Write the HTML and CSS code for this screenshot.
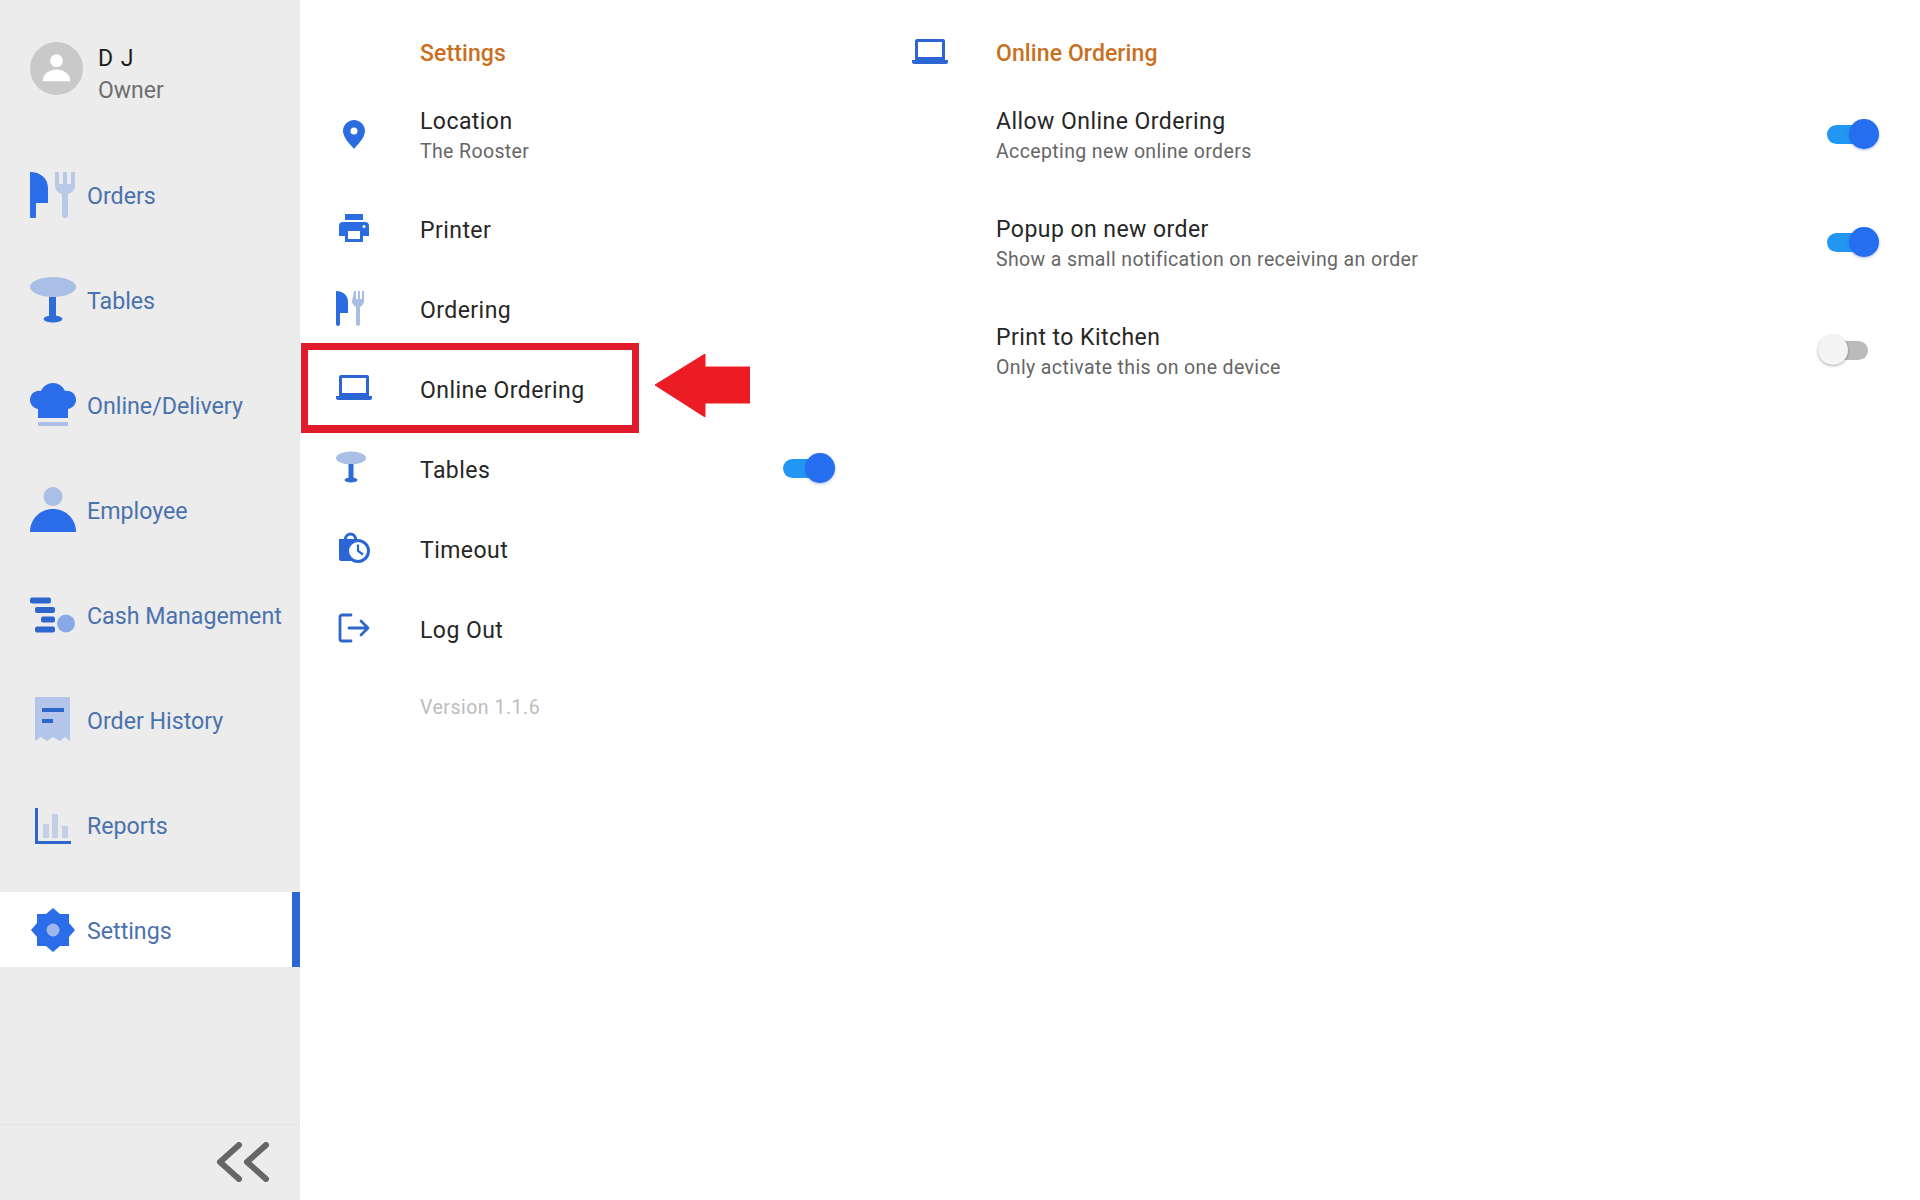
FILE: index.html
```html
<!DOCTYPE html>
<html lang="en">
<head>
<meta charset="utf-8">
<title>Settings</title>
<link rel="stylesheet" href="styles.css">
</head>
<body>
<div class="app">
  <aside class="sidebar">
    <div class="profile">
      <svg class="avatar" viewBox="0 0 54 54"><circle cx="27" cy="27" r="27" fill="#c9c9c9"/><circle cx="27" cy="19" r="6.5" fill="#fff"/><path d="M13 40c0-8 7-12 14-12s14 4 14 12z" fill="#fff"/></svg>
      <div class="profile-text"><div class="profile-name">D J</div><div class="profile-role">Owner</div></div>
    </div>
    <nav class="nav">
      <div class="nav-item"><svg class="nav-icon" viewBox="0 0 46 46"><path d="M0 0c10 0 18 6 18 16v15H6v13a3 3 0 0 1-6 0z" fill="#2b6de8"/><path d="M25 0h4v12h4V0h4v12h4V0h4v14c0 4-3 7-7 8v21a3 3 0 0 1-6 0V22c-4-1-7-4-7-8z" fill="#b9c9e8"/></svg><span>Orders</span></div>
      <div class="nav-item"><svg class="nav-icon" viewBox="0 0 46 46"><ellipse cx="23" cy="10" rx="23" ry="10" fill="#a9bfe6"/><rect x="19" y="20" width="7" height="21" fill="#2f6cd8"/><ellipse cx="23" cy="42" rx="9.500" ry="3.500" fill="#2f6cd8"/></svg><span>Tables</span></div>
      <div class="nav-item"><svg class="nav-icon" viewBox="0 0 46 46"><path d="M8 27C3 26 0 22 0 18c0-6 5-10 11-9 2-5 7-8 12-8s10 3 12 8c6-1 11 3 11 9 0 4-3 8-8 9v9H8z" fill="#2b6de8"/><rect x="8" y="40" width="30" height="4" rx="1" fill="#a9bfe6"/></svg><span>Online/Delivery</span></div>
      <div class="nav-item"><svg class="nav-icon" viewBox="0 0 46 46"><circle cx="23" cy="9.500" r="9.500" fill="#a9bfe6"/><path d="M0 45c0-13 10-23 23-23s23 10 23 23z" fill="#2b6de8"/></svg><span>Employee</span></div>
      <div class="nav-item"><svg class="nav-icon" viewBox="0 0 46 46"><g fill="#2f66cc"><rect y="5.500" width="21" height="6" rx="2"/><rect x="5" y="15" width="20" height="6" rx="2"/><rect x="11" y="24.500" width="14" height="6" rx="2"/><rect x="5" y="34.500" width="20" height="6" rx="2"/></g><circle cx="36" cy="31.500" r="9" fill="#88a8e6"/></svg><span>Cash Management</span></div>
      <div class="nav-item"><svg class="nav-icon" viewBox="0 0 46 46"><path d="M5 0h35v44l-5-4-5 4-7-4-6 4-6-4-6 4z" fill="#b3c6ea"/><rect x="12" y="11" width="22" height="4" fill="#2f66cc"/><rect x="12" y="22" width="11" height="4" fill="#2f66cc"/></svg><span>Order History</span></div>
      <div class="nav-item"><svg class="nav-icon" viewBox="0 0 46 46"><path d="M5 6h3v33h33v3H5z" fill="#2f66cc"/><g fill="#c3cfe6"><rect x="13" y="22" width="6" height="14"/><rect x="22" y="12" width="6" height="24"/><rect x="32" y="24" width="6" height="12"/></g></svg><span>Reports</span></div>
      <div class="nav-item active"><svg class="nav-icon" viewBox="0 0 46 46"><path d="M23 1l7 6h9v9l6 7-6 7v9h-9l-7 6-7-6H7v-9l-6-7 6-7V7h9z" fill="#2b6de8"/><circle cx="23" cy="23" r="6.500" fill="#9db8ec"/></svg><span>Settings</span></div>
    </nav>
    <div class="collapse">
      <svg class="collapse-icon" viewBox="0 0 54 40"><path d="M23 3L4 20l19 17M50 3L31 20l19 17" fill="none" stroke="#666" stroke-width="6" stroke-linecap="round" stroke-linejoin="round"/></svg>
    </div>
  </aside>

  <section class="menu">
    <div class="title-row"><span class="icon-slot"></span><span class="title">Settings</span></div>
    <div class="row row-tall"><span class="icon-slot"><svg class="i-loc" viewBox="0 0 22 29"><path fill-rule="evenodd" d="M11 0c6 0 11 5 11 11 0 7-8 14-11 18C8 25 0 18 0 11 0 5 5 0 11 0zm0 7.500a3.500 3.500 0 1 0 0 7 3.500 3.500 0 0 0 0-7z" fill="#2b6de0"/></svg></span><div class="two-line"><div class="label">Location</div><div class="sub">The Rooster</div></div></div>
    <div class="row"><span class="icon-slot"><svg class="i-print" viewBox="0 0 30 28"><path fill-rule="evenodd" d="M6 0h18v6H6zM4 8h22a4 4 0 0 1 4 4v10h-6v6H6v-6H0V12a4 4 0 0 1 4-4zm5 9v8h12v-8zm16-6a1.500 1.500 0 1 0 0 3 1.500 1.500 0 0 0 0-3z" fill="#2b6de0"/></svg></span><div class="label">Printer</div></div>
    <div class="row"><span class="icon-slot"><svg class="i-sq" viewBox="0 0 36 36"><path d="M0 1c8 0 12 5 12 11v11H4v11a2 2 0 0 1-4 0z" fill="#2b6de0"/><path d="M18 1h2v8h2V1h2v8h2V1h2v10c0 3-2 5-4 6v17a2 2 0 0 1-4 0V17c-2-1-4-3-4-6z" fill="#aabde4"/></svg></span><div class="label">Ordering</div></div>
    <div class="row"><span class="icon-slot"><svg class="i-laptop" viewBox="0 0 36 26"><path fill-rule="evenodd" d="M5 0h26a2 2 0 0 1 2 2v19h3v2a2 2 0 0 1-2 2H2a2 2 0 0 1-2-2v-2h3V2a2 2 0 0 1 2-2zm1 3v15h24V3z" fill="#2b66d4"/></svg></span><div class="label">Online Ordering</div></div>
    <div class="row"><span class="icon-slot"><svg class="i-sq" viewBox="0 0 36 36"><ellipse cx="15" cy="8" rx="15" ry="6.500" fill="#a9bfe6"/><rect x="12.500" y="14" width="5" height="16" fill="#2f6cd8"/><ellipse cx="15" cy="30" rx="6.500" ry="2.500" fill="#2f6cd8"/></svg></span><div class="label">Tables</div><label class="toggle on mid-toggle"></label></div>
    <div class="row"><span class="icon-slot"><svg class="i-sq" viewBox="0 0 36 36"><path d="M8 9a6.500 6.500 0 0 1 13 0h-3a3.500 3.500 0 0 0-7 0z" fill="#2b66d4"/><path d="M3 9h20v10H16v12H5a2 2 0 0 1-2-2z" fill="#2b66d4"/><circle cx="22" cy="21" r="10.500" fill="#fff" stroke="#2b66d4" stroke-width="3"/><path d="M22 14.500v6.500l5 3.500" fill="none" stroke="#2b66d4" stroke-width="2.200"/></svg></span><div class="label">Timeout</div></div>
    <div class="row"><span class="icon-slot"><svg class="i-sq" viewBox="0 0 36 36"><path d="M15 5H6a2 2 0 0 0-2 2v22a2 2 0 0 0 2 2h9M13 18h19M25 11l7 7-7 7" fill="none" stroke="#2f66cc" stroke-width="2.800" stroke-linecap="round" stroke-linejoin="round"/></svg></span><div class="label">Log Out</div></div>
    <div class="row version-row"><span class="icon-slot"></span><div class="version">Version 1.1.6</div></div>
  </section>

  <section class="detail">
    <div class="title-row detail-title"><span class="icon-slot"><svg class="i-laptop" viewBox="0 0 36 26"><path fill-rule="evenodd" d="M5 0h26a2 2 0 0 1 2 2v19h3v2a2 2 0 0 1-2 2H2a2 2 0 0 1-2-2v-2h3V2a2 2 0 0 1 2-2zm1 3v15h24V3z" fill="#2b66d4"/></svg></span><span class="title">Online Ordering</span></div>
    <div class="row row-tall detail-row"><div class="two-line"><div class="label">Allow Online Ordering</div><div class="sub">Accepting new online orders</div></div><label class="toggle on"></label></div>
    <div class="row row-tall detail-row"><div class="two-line"><div class="label">Popup on new order</div><div class="sub">Show a small notification on receiving an order</div></div><label class="toggle on"></label></div>
    <div class="row row-tall detail-row"><div class="two-line"><div class="label">Print to Kitchen</div><div class="sub">Only activate this on one device</div></div><label class="toggle off"></label></div>
  </section>

  <div class="highlight"></div>
  <svg class="arrow" viewBox="0 0 95 63"><path d="M0 31L50 0v13h45v36H50v14z" fill="#ec1c24" stroke="#ec1c24" stroke-width="1" stroke-linejoin="round"/></svg>
</div>
</body>
</html>
```
FILE: styles.css
```css
* { box-sizing: border-box; }
html, body { margin: 0; height: 100%; }
body { font-family: Roboto, "Liberation Sans", sans-serif; background: #fff; }
.app { position: relative; display: flex; width: 1920px; height: 1200px; overflow: hidden; }

.sidebar { width: 300px; flex: none; background: #ececec; display: flex; flex-direction: column; }
.profile { height: 157px; padding: 42px 0 0 30px; display: flex; gap: 15px; flex: none; }
.avatar { width: 53px; height: 53px; flex: none; }
.profile-text { margin-top: 1px; }
.profile-name { font-size: 23px; line-height: 32px; color: #1d1d1d; letter-spacing: 1px; }
.profile-role { font-size: 23px; line-height: 32px; color: #6f6f6f; }
.nav { flex: 1; display: flex; flex-direction: column; gap: 30px; }
.nav-item { height: 75px; flex: none; display: flex; align-items: center; gap: 11px; padding-left: 30px; font-size: 23.200px; color: #4a72ad; }
.nav-item span { padding-top: 2px; }
.nav-icon { width: 46px; height: 46px; flex: none; }
.nav-item.active { background: #fff; border-right: 8px solid #2b66d4; }
.collapse { height: 76px; flex: none; border-top: 1px solid #e4e4e4; display: flex; justify-content: flex-end; align-items: center; padding: 0 30px 2px 0; }
.collapse-icon { width: 54px; height: 40px; }

.menu { width: 612px; flex: none; padding-top: 23px; display: flex; flex-direction: column; }
.detail { flex: 1; padding-top: 23px; display: flex; flex-direction: column; }
.title-row { height: 57px; flex: none; display: flex; align-items: center; padding-left: 36px; }
.detail-title { padding-left: 0; }
.icon-slot { width: 36px; height: 36px; flex: none; margin-right: 48px; display: flex; align-items: center; justify-content: center; }
.title { font-size: 23px; font-weight: 500; color: #c9701f; letter-spacing: 0.100px; margin-top: 3px; }
.row { height: 80px; flex: none; display: flex; align-items: center; padding-left: 36px; }
.row > .label { margin-top: 5px; }
.row-tall { height: 108px; }
.two-line { margin-top: 3px; }
.detail-row { padding-left: 84px; padding-right: 41px; justify-content: space-between; }
.label { font-size: 23px; line-height: 32px; color: #262626; letter-spacing: 0.450px; }
.sub { font-size: 19.500px; line-height: 28px; color: #666; letter-spacing: 0.370px; }
.version { font-size: 19.500px; color: #bcbcbc; letter-spacing: 0.500px; }
.version-row { height: 78px; }
.i-loc { width: 22px; height: 29px; }
.i-print { width: 30px; height: 28px; }
.i-sq { width: 36px; height: 36px; }
.i-laptop { width: 36px; height: 26px; }

.toggle { display: block; position: relative; width: 52px; height: 30px; flex: none; }
.toggle::before { content: ""; position: absolute; left: 0; right: 10px; top: 6px; height: 19px; border-radius: 10px; background: #2196f3; }
.toggle::after { content: ""; position: absolute; right: 0; top: 0; width: 30px; height: 30px; border-radius: 50%; background: #256ef0; box-shadow: 0 1px 3px rgba(60, 90, 200, 0.450); }
.toggle.off { width: 50px; margin-right: 11px; }
.toggle.off::before { left: 12px; right: 0; background: #bbb; }
.toggle.off::after { left: 0; right: auto; background: #f4f4f4; box-shadow: 0 1px 3px rgba(0, 0, 0, 0.350); }
.mid-toggle { margin-left: auto; margin-right: 77px; }

.highlight { position: absolute; left: 301px; top: 343px; width: 338px; height: 90px; border: 7px solid #e01b2b; border-bottom-width: 8px; }
.arrow { position: absolute; left: 655px; top: 354px; width: 95px; height: 63px; }
```
